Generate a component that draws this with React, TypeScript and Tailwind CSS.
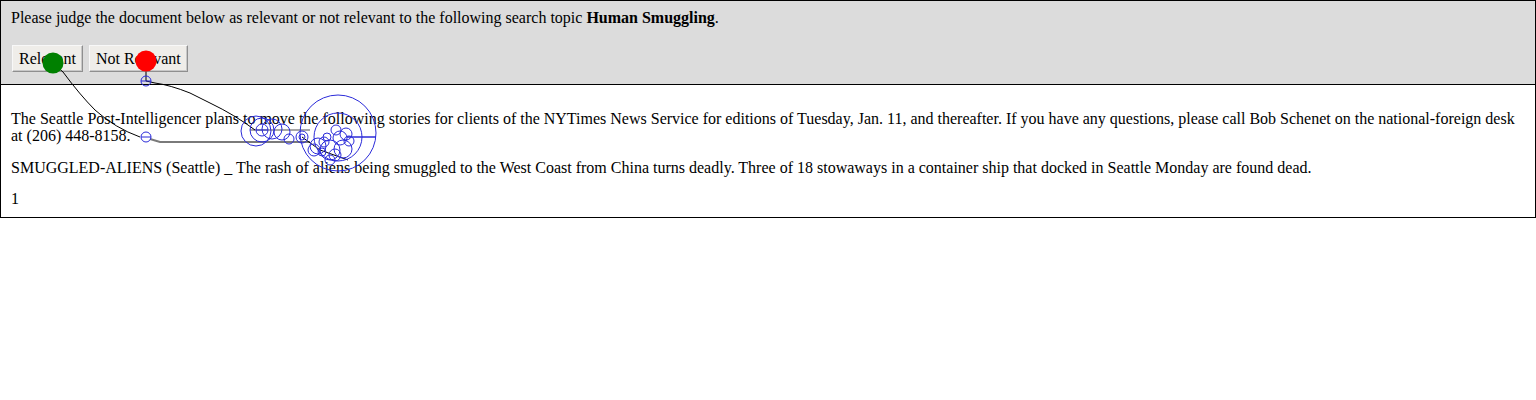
import React from 'react';

type Fix = { x: number; y: number; r: number; line?: boolean };

// gaze fixations drawn over the page
const fixations: Fix[] = [
  { x: 146, y: 81, r: 5, line: true },
  { x: 146, y: 137, r: 5, line: true },
  { x: 262, y: 130, r: 6, line: true },
  { x: 262, y: 130, r: 12 },
  { x: 256, y: 131, r: 15 },
  { x: 272, y: 129, r: 10 },
  { x: 282, y: 132, r: 8 },
  { x: 289, y: 139, r: 5 },
  { x: 302, y: 137, r: 6 },
  { x: 302, y: 137, r: 3 },
  { x: 338, y: 133, r: 38 },
  { x: 338, y: 137, r: 24 },
  { x: 318, y: 146, r: 8 },
  { x: 324, y: 142, r: 5 },
  { x: 330, y: 150, r: 10 },
  { x: 340, y: 138, r: 7 },
  { x: 346, y: 134, r: 6 },
  { x: 336, y: 130, r: 5 },
  { x: 335, y: 155, r: 6 },
  { x: 330, y: 160, r: 5 },
  { x: 314, y: 150, r: 6 },
  { x: 343, y: 149, r: 9 },
  { x: 322, y: 152, r: 4 },
  { x: 327, y: 137, r: 4 },
  { x: 349, y: 141, r: 5 },
];

function GazeOverlay() {
  return (
    <svg
      className="absolute left-0 top-0 pointer-events-none"
      width={1536}
      height={400}
      viewBox="0 0 1536 400"
    >
      <path d="M146 61 L146 81" stroke="#6b6b6b" strokeWidth={2} fill="none" />
      <path d="M150 139 L160 142 L310 142" stroke="#7a7a7a" strokeWidth={2} fill="none" />
      <path d="M250 130 L310 130" stroke="#8a8a8a" strokeWidth={1.5} fill="none" />
      <path
        d="M146 81 L155 83 Q170 85 190 93 L210 103 Q235 115 255 130"
        stroke="#000"
        strokeWidth={1}
        fill="none"
      />
      <path
        d="M53 63 L63 72 Q80 95 95 110 Q115 128 140 137"
        stroke="#000"
        strokeWidth={1}
        fill="none"
      />
      <path d="M302 137 L320 150 L348 160" stroke="#000" strokeWidth={1} fill="none" />
      {fixations.map((f, i) => (
        <g key={i}>
          <circle cx={f.x} cy={f.y} r={f.r} stroke="#2b2bd9" strokeWidth={1} fill="none" />
          {f.line && (
            <path
              d={`M${f.x - f.r} ${f.y} L${f.x + f.r} ${f.y}`}
              stroke="#2b2bd9"
              strokeWidth={1}
            />
          )}
        </g>
      ))}
      <path d="M347 137 L376 137" stroke="#2b2bd9" strokeWidth={1.5} fill="none" />
      <circle cx={53} cy={63} r={10.5} fill="#008000" />
      <circle cx={146} cy={61} r={10.5} fill="#ff0000" />
    </svg>
  );
}

function JudgeButton({ label }: { label: string }) {
  return (
    <button className="h-[27px] px-[6px] bg-[#efede9] border border-t-[#f8f8f8] border-l-[#f8f8f8] border-r-[#8f8f8f] border-b-[#8f8f8f] shadow-[inset_-1px_-1px_0_#c8c8c8] leading-[18px] text-black">
      {label}
    </button>
  );
}

export default function App() {
  return (
    <div className="relative w-[1536px] font-['Liberation_Serif','Times_New_Roman',serif] text-[16px] text-black">
      <div className="border border-black">
        <div className="bg-[#dcdcdc] border-b border-black pl-[10px] pr-[10px] pt-[8px] pb-[12px]">
          <p className="leading-[18px]">
            Please judge the document below as relevant or not relevant to the following search topic{' '}
            <b>Human Smuggling</b>.
          </p>
          <div className="mt-[18px] ml-[1px] flex gap-[6px]">
            <JudgeButton label="Relevant" />
            <JudgeButton label="Not Relevant" />
          </div>
        </div>
        <div className="bg-white px-[10px] pt-[25px] pb-[10px] leading-[17px]">
          <p>
            The Seattle Post-Intelligencer plans to move the following stories for clients of the NYTimes News
            Service for editions of Tuesday, Jan. 11, and thereafter. If you have any questions, please call Bob
            Schenet on the national-foreign desk at (206) 448-8158.
          </p>
          <p className="mt-[15px]">
            SMUGGLED-ALIENS (Seattle) _ The rash of aliens being smuggled to the West Coast from China turns
            deadly. Three of 18 stowaways in a container ship that docked in Seattle Monday are found dead.
          </p>
          <p className="mt-[14px]">1</p>
        </div>
      </div>
      <GazeOverlay />
    </div>
  );
}
